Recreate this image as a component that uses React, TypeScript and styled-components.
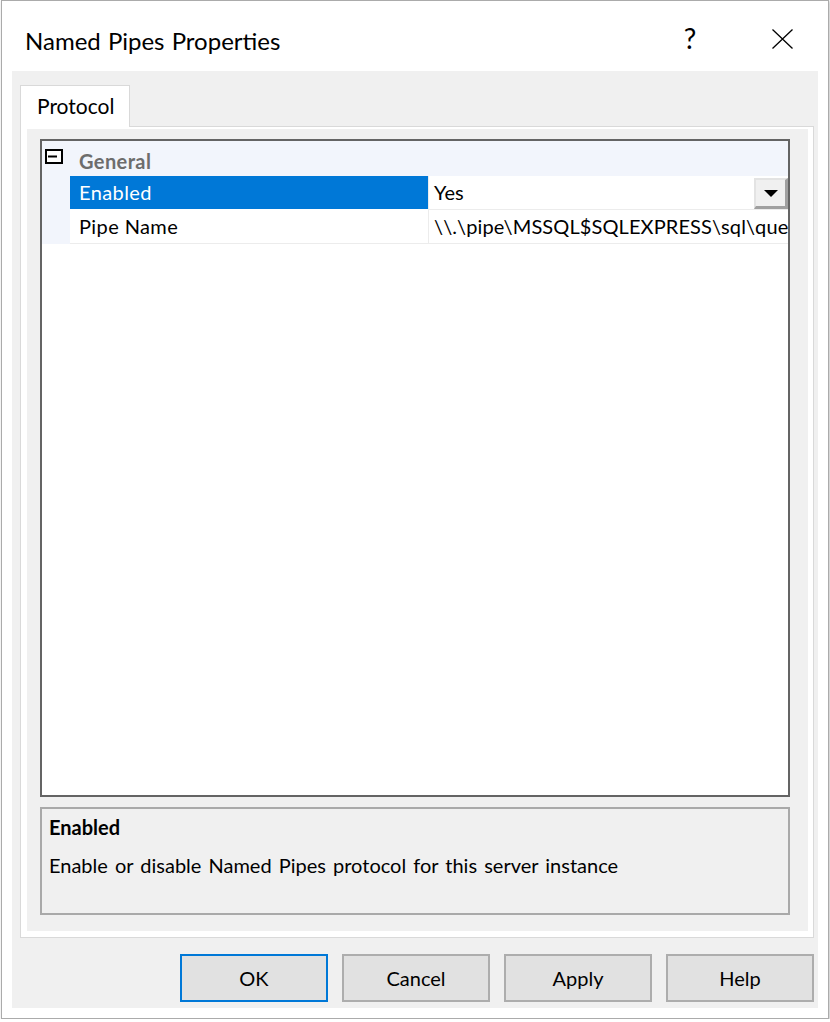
import styled, { createGlobalStyle } from "styled-components";

const colors = {
  face: "#f0f0f0",
  border: "#d9d9d9",
  gridBorder: "#646464",
  category: "#f2f5fc",
  line: "#ececec",
  select: "#0078d7",
  button: "#e1e1e1",
  buttonBorder: "#adadad",
};

const GlobalStyle = createGlobalStyle`
  html, body {
    margin: 0;
    padding: 0;
    background: #fff;
  }
  body {
    font-family: Lato, "Noto Sans", "DejaVu Sans", sans-serif;
    color: #000;
    word-spacing: 2px;
  }
  * {
    box-sizing: border-box;
  }
`;

const Window = styled.div`
  width: 828px;
  height: 1019px;
  margin-left: 1px;
  border: 1px solid #ababab;
  background: #fff;
  box-shadow: 1px 1px 3px rgba(0, 0, 0, 0.25);
  display: flex;
  flex-direction: column;
`;

const TitleBar = styled.div`
  height: 70px;
  flex: none;
  display: flex;
  align-items: flex-start;
`;

const Title = styled.div`
  flex: 1;
  padding: 26px 0 0 23px;
  font-size: 24px;
  line-height: 28px;
  word-spacing: 1px;
`;

const CaptionButton = styled.div`
  width: 92px;
  height: 70px;
  display: flex;
  justify-content: center;
  padding-top: 23px;
  font-size: 28px;
  line-height: 28px;
`;

const Client = styled.div`
  flex: 1;
  margin: 0 10px 10px 10px;
  background: ${colors.face};
  padding: 14px 4px 6px 8px;
  display: flex;
  flex-direction: column;
`;

const TabStrip = styled.div`
  display: flex;
  margin-bottom: -1px;
  position: relative;
  z-index: 1;
`;

const Tab = styled.div`
  width: 110px;
  height: 42px;
  background: #fff;
  border: 1px solid ${colors.border};
  border-bottom: none;
  padding: 6px 0 0 16px;
  font-size: 21px;
  line-height: 28px;
`;

const TabPage = styled.div`
  flex: 1;
  background: #fff;
  border: 1px solid ${colors.border};
  padding: 2px 5px 6px 6px;
  display: flex;
`;

const PropertyPage = styled.div`
  flex: 1;
  background: ${colors.face};
  padding: 10px 18px 16px 13px;
  display: flex;
  flex-direction: column;
  gap: 10px;
`;

const Grid = styled.div`
  flex: 1;
  background: #fff;
  border: 2px solid ${colors.gridBorder};
  display: grid;
  grid-template-columns: 28px 358px 1fr;
  grid-auto-rows: min-content;
  font-size: 20px;
  letter-spacing: 0.4px;
  word-spacing: 0;
  overflow: hidden;
`;

const CategoryRow = styled.div`
  grid-column: 1 / -1;
  height: 35px;
  background: ${colors.category};
  display: flex;
  align-items: flex-start;
`;

const Expander = styled.svg`
  margin: 8px 0 0 3px;
  flex: none;
`;

const CategoryLabel = styled.span`
  margin-left: 16px;
  padding-top: 7px;
  font-weight: 700;
  color: #6d6d6d;
  line-height: 26px;
`;

const Margin = styled.div`
  background: ${colors.category};
  height: 34px;
`;

const NameCell = styled.div<{ $selected?: boolean }>`
  height: 34px;
  padding: 3px 0 0 9px;
  line-height: 26px;
  white-space: nowrap;
  overflow: hidden;
  border-bottom: 1px solid ${(p) => (p.$selected ? "#fff" : colors.line)};
  background: ${(p) => (p.$selected ? colors.select : "#fff")};
  color: ${(p) => (p.$selected ? "#fff" : "#000")};
`;

const ValueCell = styled.div`
  height: 34px;
  border-left: 1px solid ${colors.line};
  border-bottom: 1px solid ${colors.line};
  display: flex;
  align-items: flex-start;
  white-space: nowrap;
  overflow: hidden;

  span {
    flex: 1;
    min-width: 0;
    overflow: hidden;
    padding: 3px 0 0 5px;
    line-height: 26px;
    letter-spacing: 0.1px;
  }
`;

const DropButton = styled.div`
  width: 34px;
  height: 31px;
  margin-top: 2px;
  flex: none;
  background: ${colors.face};
  border-top: 2px solid #e3e3e3;
  border-left: 2px solid #e3e3e3;
  border-right: 3px solid #a0a0a0;
  border-bottom: 3px solid #a0a0a0;
  display: flex;
  align-items: center;
  justify-content: center;
`;

const Description = styled.div`
  height: 108px;
  flex: none;
  border: 2px solid #a9a9a9;
  padding: 4px 0 0 7px;
  font-size: 20px;

  h4 {
    margin: 0;
    font-size: 20px;
    font-weight: 700;
    line-height: 28px;
  }
  p {
    margin: 10px 0 0;
    line-height: 28px;
  }
`;

const ButtonRow = styled.div`
  display: flex;
  justify-content: flex-end;
  gap: 14px;
  margin-top: 16px;
`;

const Button = styled.div<{ $default?: boolean }>`
  width: 148px;
  height: 48px;
  background: ${colors.button};
  border: 2px solid
    ${(p) => (p.$default ? colors.select : colors.buttonBorder)};
  display: flex;
  align-items: center;
  justify-content: center;
  font-size: 20px;
`;

export default function App() {
  const properties = [
    { name: "Enabled", value: "Yes", selected: true },
    {
      name: "Pipe Name",
      value: "\\\\.\\pipe\\MSSQL$SQLEXPRESS\\sql\\query",
      selected: false,
    },
  ];

  return (
    <>
      <GlobalStyle />
      <Window>
        <TitleBar>
          <Title>Named Pipes Properties</Title>
          <CaptionButton>?</CaptionButton>
          <CaptionButton>
            <svg width="21" height="20" viewBox="0 0 21 20" style={{ marginTop: 5 }}>
              <path d="M0.5 0.5 L20.5 19.5 M20.5 0.5 L0.5 19.5" stroke="#000" strokeWidth="1.3" />
            </svg>
          </CaptionButton>
        </TitleBar>
        <Client>
          <TabStrip>
            <Tab>Protocol</Tab>
          </TabStrip>
          <TabPage>
            <PropertyPage>
              <Grid>
                <CategoryRow>
                  <Expander width="18" height="15" viewBox="0 0 18 15">
                    <rect x="1" y="1" width="16" height="13" fill="#fff" stroke="#000" strokeWidth="2" />
                    <path d="M3 7.5 H12" stroke="#000" strokeWidth="2" />
                  </Expander>
                  <CategoryLabel>General</CategoryLabel>
                </CategoryRow>
                {properties.map((prop) => (
                  <>
                    <Margin key={prop.name + "-m"} />
                    <NameCell key={prop.name} $selected={prop.selected}>
                      {prop.name}
                    </NameCell>
                    <ValueCell key={prop.name + "-v"}>
                      <span>{prop.value}</span>
                      {prop.selected ? (
                        <DropButton>
                          <svg width="14" height="7" viewBox="0 0 14 7">
                            <path d="M0 0 H14 L7 7 Z" fill="#000" />
                          </svg>
                        </DropButton>
                      ) : null}
                    </ValueCell>
                  </>
                ))}
              </Grid>
              <Description>
                <h4>Enabled</h4>
                <p>Enable or disable Named Pipes protocol for this server instance</p>
              </Description>
            </PropertyPage>
          </TabPage>
          <ButtonRow>
            <Button $default>OK</Button>
            <Button>Cancel</Button>
            <Button>Apply</Button>
            <Button>Help</Button>
          </ButtonRow>
        </Client>
      </Window>
    </>
  );
}
